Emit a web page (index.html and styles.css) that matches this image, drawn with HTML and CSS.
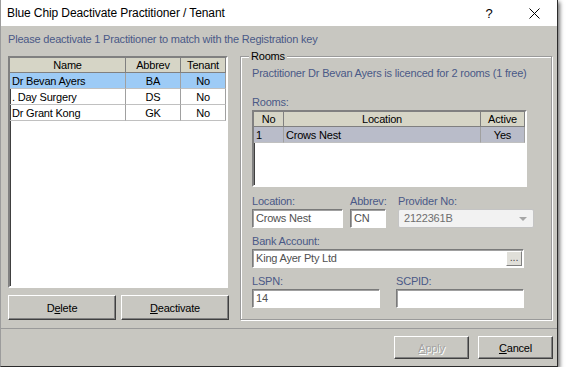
FILE: index.html
```html
<!DOCTYPE html>
<html lang="en">
<head>
    <meta charset="UTF-8">
    <title>Blue Chip Deactivate Practitioner / Tenant</title>
    <link rel="stylesheet" href="styles.css">
</head>
<body>

<div class="window">
    <div class="titlebar">
        <div class="title">Blue Chip Deactivate Practitioner / Tenant</div>
        <div class="help">?</div>
        <svg class="close" width="11" height="11" viewBox="0 0 11 11">
            <path d="M0.5 0.5 L10.5 10.5 M10.5 0.5 L0.5 10.5" stroke="#000" stroke-width="1" fill="none"/>
        </svg>
    </div>

    <div class="content">
        <div class="notice">Please deactivate 1 Practitioner to match with the Registration key</div>

        <div class="main">
            <!-- Practitioner list -->
            <div class="left">
                <div class="listbox">
                    <div class="row head prac-cols">
                        <div class="cell center">Name</div>
                        <div class="cell center">Abbrev</div>
                        <div class="cell center">Tenant</div>
                    </div>
                    <div class="row prac-cols selected">
                        <div class="cell">Dr Bevan Ayers</div>
                        <div class="cell center">BA</div>
                        <div class="cell center">No</div>
                    </div>
                    <div class="row prac-cols">
                        <div class="cell">. Day Surgery</div>
                        <div class="cell center">DS</div>
                        <div class="cell center">No</div>
                    </div>
                    <div class="row prac-cols">
                        <div class="cell">Dr Grant Kong</div>
                        <div class="cell center">GK</div>
                        <div class="cell center">No</div>
                    </div>
                </div>
                <div class="left-buttons">
                    <button class="btn">D<u>e</u>lete</button>
                    <button class="btn"><u>D</u>eactivate</button>
                </div>
            </div>

            <!-- Rooms group -->
            <div class="group">
                <span class="legend">Rooms</span>
                <div class="licence">Practitioner Dr Bevan Ayers is licenced for 2 rooms (1 free)</div>
                <div class="label rooms-label">Rooms:</div>
                <div class="listbox rooms">
                    <div class="row head room-cols">
                        <div class="cell center">No</div>
                        <div class="cell center">Location</div>
                        <div class="cell center">Active</div>
                    </div>
                    <div class="row room-cols current">
                        <div class="cell">1</div>
                        <div class="cell">Crows Nest</div>
                        <div class="cell center">Yes</div>
                    </div>
                </div>

                <div class="fields first">
                    <div class="field w-location">
                        <div class="label">Location:</div>
                        <div class="input">Crows Nest</div>
                    </div>
                    <div class="field w-abbrev">
                        <div class="label">Abbrev:</div>
                        <div class="input">CN</div>
                    </div>
                    <div class="field w-provider">
                        <div class="label">Provider No:</div>
                        <div class="combo">2122361B<span class="arrow"></span></div>
                    </div>
                </div>

                <div class="fields">
                    <div class="field w-bank">
                        <div class="label">Bank Account:</div>
                        <div class="input bank">King Ayer Pty Ltd<span class="dots">...</span></div>
                    </div>
                </div>

                <div class="fields">
                    <div class="field w-half">
                        <div class="label">LSPN:</div>
                        <div class="input">14</div>
                    </div>
                    <div class="field w-half">
                        <div class="label">SCPID:</div>
                        <div class="input"></div>
                    </div>
                </div>
            </div>
        </div>
    </div>

    <div class="separator"></div>

    <div class="footer">
        <button class="btn small" disabled><u>A</u>pply</button>
        <button class="btn small"><u>C</u>ancel</button>
    </div>
</div>

</body>
</html>
```

FILE: styles.css
```css
body {
    margin: 0;
    background-color: #fff;
    font-family: "Liberation Sans", Arial, sans-serif;
    font-size: 11px;
    letter-spacing: -0.2px;
    color: #000;
}
.window {
    width: 556px;
    height: 366px;
    background-color: #c8c7c1;
    border-left: 1px solid #9c9c9c;
    border-right: 1px solid #2b2b2b;
    border-bottom: 1px solid #2b2b2b;
    box-shadow: 2px 2px 4px rgba(0, 0, 0, 0.55);
}
.titlebar {
    height: 26px;
    background-color: #fff;
    display: flex;
    align-items: center;
    padding-left: 6px;
    font-size: 12px;
    letter-spacing: -0.1px;
}
.title {
    flex: 1;
}
.help {
    width: 12px;
    text-align: center;
    font-size: 13px;
}
.close {
    margin-left: 34px;
    margin-right: 17px;
}
.content {
    padding: 7px 4px 0 7px;
}
.notice, .licence, .label {
    color: #4a5987;
    line-height: 14px;
}
.notice {
    line-height: 13px;
}
.main {
    display: flex;
    margin-top: 10px;
    height: 264px;
}
.left {
    width: 221px;
    margin-right: 11px;
}
.listbox {
    width: 216px;
    height: 228px;
    background-color: #fff;
    border: 2px solid;
    border-color: #808080 #fff #fff #808080;
    box-shadow: inset 1px 1px 0 #404040;
}
.row {
    display: grid;
    height: 16px;
    line-height: 16px;
}
.prac-cols {
    grid-template-columns: 116px 55px 45px;
}
.room-cols {
    grid-template-columns: 30px 197px 44px;
}
.cell {
    border-right: 1px solid #a0a0a0;
    border-bottom: 1px solid #c0c0c0;
    padding-left: 2px;
    white-space: nowrap;
    overflow: hidden;
}
.cell.center {
    text-align: center;
    padding-left: 0;
}
.head {
    height: 15px;
    line-height: 15px;
}
.head .cell {
    background-color: #d6d5c6;
    border-right-color: #808080;
    border-bottom-color: #808080;
}
.selected {
    background-color: #9dcbf6;
}
.current {
    background-color: #b9bcc9;
}
.left-buttons {
    display: flex;
    gap: 5px;
    margin-top: 7px;
}
.left-buttons .btn {
    width: 108px;
    height: 25px;
}
.btn {
    background-color: #c8c7c1;
    border: 1px solid;
    border-color: #fff #404040 #404040 #fff;
    box-shadow: inset -1px -1px 0 #808080;
    font-family: inherit;
    font-size: 11px;
    letter-spacing: -0.2px;
    color: #000;
    padding: 0;
}
.btn:disabled {
    color: #a3a3a3;
    text-shadow: 1px 1px 0 #fff;
}
.group {
    position: relative;
    width: 299px;
    padding-left: 11px;
    border: 1px solid #9a9a9a;
    box-shadow: inset 1px 1px 0 #fff, 1px 1px 0 #fff;
}
.legend {
    position: absolute;
    top: -8px;
    left: 8px;
    padding: 0 2px;
    line-height: 14px;
    background-color: #c8c7c1;
}
.licence {
    margin-top: 9px;
}
.rooms-label {
    margin-top: 15px;
}
.rooms {
    width: 271px;
    height: 73px;
    margin-top: 1px;
}
.fields {
    display: flex;
    gap: 7px;
    margin-top: 7px;
}
.fields.first {
    margin-top: 8px;
}
.field .label {
    line-height: 13px;
    margin-bottom: 1px;
}
.w-location { width: 91px; }
.w-abbrev { width: 36px; margin-right: 5px; }
.w-provider { width: 136px; }
.w-bank { width: 272px; }
.w-half { width: 128px; margin-right: 9px; }
.input, .combo {
    box-sizing: border-box;
    height: 19px;
    line-height: 17px;
    padding-left: 3px;
    background-color: #fff;
    color: #505050;
    border: 1px solid;
    border-color: #7a7a7a #fff #fff #7a7a7a;
    box-shadow: inset 1px 1px 0 #a0a0a0;
    white-space: nowrap;
}
.combo {
    display: flex;
    justify-content: space-between;
    align-items: center;
    padding: 0 6px 0 5px;
    background-color: #f2f2f2;
    color: #6e6e6e;
    border: 1px solid #c4c4c4;
    border-radius: 2px;
    box-shadow: none;
}
.arrow {
    width: 0;
    height: 0;
    border-left: 4px solid transparent;
    border-right: 4px solid transparent;
    border-top: 4px solid #a6a6a6;
}
.input.bank {
    display: flex;
    justify-content: space-between;
    align-items: center;
    padding-right: 1px;
}
.dots {
    width: 14px;
    height: 13px;
    line-height: 10px;
    text-align: center;
    color: #505050;
    background-color: #e0dfd9;
    border: 1px solid;
    border-color: #fff #808080 #808080 #fff;
}
.separator {
    margin-top: 8px;
    border-top: 1px solid #9a9a9a;
}
.footer {
    display: flex;
    justify-content: flex-end;
    gap: 9px;
    margin-top: 7px;
    padding-right: 4px;
}
.footer .btn {
    width: 75px;
    height: 23px;
}
```
